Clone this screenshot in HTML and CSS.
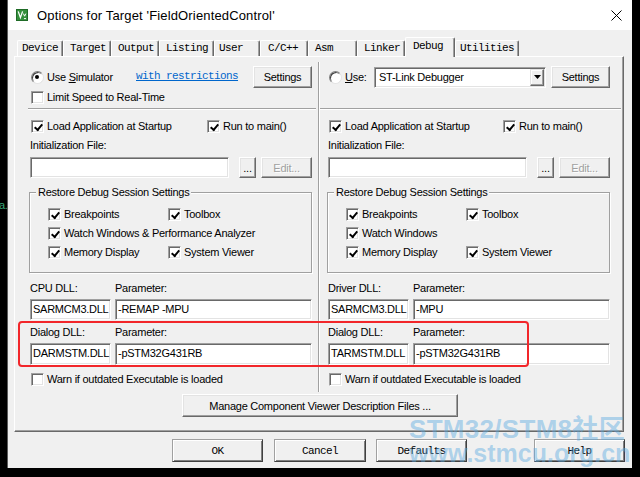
FILE: index.html
```html
<!DOCTYPE html>
<html lang="en">
<head>
<meta charset="utf-8">
<title>Options for Target 'FieldOrientedControl'</title>
<link rel="stylesheet" href="styles.css">
</head>
<body>
<div class="desk-note">a.</div>
<div class="window">
  <div class="titlebar">
    <svg class="app-icon" viewBox="0 0 12 12" aria-hidden="true">
      <rect x="0.5" y="0.5" width="11" height="11" fill="#35903c" stroke="#1f6b27"/>
      <path d="M2.2 2.4 L4.4 8.6 L6.6 2.4" stroke="#fff" stroke-width="1.3" fill="none"/>
      <path d="M7.4 4.6 L8.6 7.2 L9.8 4.6 M8 9.6 H10" stroke="#fff" stroke-width="1" fill="none"/>
    </svg>
    <span class="title">Options for Target 'FieldOrientedControl'</span>
    <svg class="close" viewBox="0 0 11 11" aria-hidden="true">
      <path d="M0.5 0.5 L10.5 10.5 M10.5 0.5 L0.5 10.5" stroke="#000" stroke-width="1" fill="none"/>
    </svg>
  </div>

  <div class="client">
    <div class="tabs">
      <div class="tab">Device</div>
      <div class="tab">Target</div>
      <div class="tab">Output</div>
      <div class="tab">Listing</div>
      <div class="tab">User</div>
      <div class="tab">C/C++</div>
      <div class="tab">Asm</div>
      <div class="tab">Linker</div>
      <div class="tab active">Debug</div>
      <div class="tab">Utilities</div>
    </div>

    <div class="panel">
      <div class="cols">
        <!-- Simulator side -->
        <div class="col col-sim">
          <div class="row r-top">
            <label class="opt opt-sim"><span class="radio on"></span><span>Use <u>S</u>imulator</span></label>
            <span class="link">with restrictions</span>
            <div class="btn settings">Settings</div>
          </div>
          <div class="row r-line r-limit">
            <label class="opt"><span class="box"></span>Limit Speed to Real-Time</label>
          </div>
          <div class="sep"></div>
          <div class="row r-line r-load">
            <label class="opt opt-first"><span class="box on"></span>Load Application at Startup</label>
            <label class="opt"><span class="box on"></span>Run to main()</label>
          </div>
          <div class="row r-line r-label">Initialization File:</div>
          <div class="row r-init">
            <div class="field init"></div>
            <div class="btn dots">...</div>
            <div class="btn edit disabled">Edit...</div>
          </div>
          <div class="group">
            <span class="legend">Restore Debug Session Settings</span>
            <div class="row r-line g-first">
              <label class="opt opt-col"><span class="box on"></span>Breakpoints</label>
              <label class="opt"><span class="box on"></span>Toolbox</label>
            </div>
            <div class="row r-line g-next">
              <label class="opt"><span class="box on"></span>Watch Windows &amp; Performance Analyzer</label>
            </div>
            <div class="row r-line g-next">
              <label class="opt opt-col"><span class="box on"></span>Memory Display</label>
              <label class="opt"><span class="box on"></span>System Viewer</label>
            </div>
          </div>
          <div class="row r-line dll-labels">
            <span class="dll-cap">CPU DLL:</span><span>Parameter:</span>
          </div>
          <div class="row dll-fields">
            <div class="field dll">SARMCM3.DLL</div>
            <div class="field param">-REMAP -MPU</div>
          </div>
          <div class="row r-line dll-labels dlg">
            <span class="dll-cap">Dialog DLL:</span><span>Parameter:</span>
          </div>
          <div class="row dll-fields tall">
            <div class="field dll">DARMSTM.DLL</div>
            <div class="field param">-pSTM32G431RB</div>
          </div>
          <div class="row r-line r-warn">
            <label class="opt"><span class="box"></span>Warn if outdated Executable is loaded</label>
          </div>
        </div>

        <!-- Target driver side -->
        <div class="col col-hw">
          <div class="row r-top">
            <label class="opt opt-use"><span class="radio"></span><span><u>U</u>se:</span></label>
            <div class="combo">
              <span>ST-Link Debugger</span>
              <span class="combo-arrow">
                <svg viewBox="0 0 7 4" aria-hidden="true"><path d="M0 0 H7 L3.5 4 Z" fill="#000"/></svg>
              </span>
            </div>
            <div class="btn settings">Settings</div>
          </div>
          <div class="row r-line r-limit"></div>
          <div class="sep"></div>
          <div class="row r-line r-load">
            <label class="opt opt-first hw"><span class="box on"></span>Load Application at Startup</label>
            <label class="opt"><span class="box on"></span>Run to main()</label>
          </div>
          <div class="row r-line r-label">Initialization File:</div>
          <div class="row r-init">
            <div class="field init"></div>
            <div class="btn dots">...</div>
            <div class="btn edit disabled">Edit...</div>
          </div>
          <div class="group">
            <span class="legend">Restore Debug Session Settings</span>
            <div class="row r-line g-first">
              <label class="opt opt-col"><span class="box on"></span>Breakpoints</label>
              <label class="opt"><span class="box on"></span>Toolbox</label>
            </div>
            <div class="row r-line g-next">
              <label class="opt"><span class="box on"></span>Watch Windows</label>
            </div>
            <div class="row r-line g-next">
              <label class="opt opt-col"><span class="box on"></span>Memory Display</label>
              <label class="opt"><span class="box on"></span>System Viewer</label>
            </div>
          </div>
          <div class="row r-line dll-labels">
            <span class="dll-cap">Driver DLL:</span><span>Parameter:</span>
          </div>
          <div class="row dll-fields">
            <div class="field dll">SARMCM3.DLL</div>
            <div class="field param">-MPU</div>
          </div>
          <div class="row r-line dll-labels dlg">
            <span class="dll-cap">Dialog DLL:</span><span>Parameter:</span>
          </div>
          <div class="row dll-fields tall">
            <div class="field dll">TARMSTM.DLL</div>
            <div class="field param">-pSTM32G431RB</div>
          </div>
          <div class="row r-line r-warn">
            <label class="opt"><span class="box"></span>Warn if outdated Executable is loaded</label>
          </div>
        </div>
      </div>

      <div class="btn manage">Manage Component Viewer Description Files ...</div>
    </div>

    <div class="footer">
      <div class="btn dlg-btn">OK</div>
      <div class="btn dlg-btn cancel">Cancel</div>
      <div class="btn dlg-btn defaults">Defaults</div>
      <div class="btn dlg-btn help">Help</div>
    </div>
  </div>

  <!-- red annotation frame around the Dialog DLL rows -->
  <div class="highlight"></div>

  <div class="watermark">
    <div>STM32/STM8社区</div>
    <div>www.stmcu.org.cn</div>
  </div>
</div>
</body>
</html>
```

FILE: styles.css
```css
* { box-sizing: border-box; }

html, body { margin: 0; padding: 0; }

body {
  position: relative;
  width: 640px;
  height: 477px;
  overflow: hidden;
  background: #000;
  color: #000;
  font-family: "Liberation Sans", Arial, sans-serif;
  font-size: 11px;
  letter-spacing: -0.25px;
}

.desk-note {
  position: absolute;
  left: -1px;
  top: 199px;
  color: #3aa878;
  font-size: 11px;
}

/* ---------- window frame ---------- */
.window {
  position: relative;
  margin-left: 8px;
  width: 624px;
  height: 468px;
  background: #f0f0f0;
  display: flex;
  flex-direction: column;
  box-shadow: -1px 0 0 #5c5c5c;
}

.titlebar {
  flex: none;
  height: 30px;
  background: #fff;
  display: flex;
  align-items: center;
  padding: 0 10px 0 8px;
}

.app-icon { width: 12px; height: 12px; margin-right: 9px; margin-top: -1px; }

.title {
  flex: 1;
  font-size: 13px;
  letter-spacing: 0.15px;
  color: #000;
}

.close { width: 11px; height: 11px; }

.client {
  flex: 1;
  display: flex;
  flex-direction: column;
  padding: 7px 0 0 6px;
}

/* ---------- tab strip ---------- */
.tabs {
  position: relative;
  z-index: 1;
  display: flex;
  align-items: flex-end;
  height: 19px;
  padding-left: 3px;
}

.tab {
  height: 16px;
  line-height: 15px;
  padding-left: 6px;
  font-family: "Liberation Mono", "Courier New", monospace;
  font-size: 11px;
  letter-spacing: -0.6px;
  border-top: 1px solid #fff;
  border-left: 1px solid #fff;
  border-right: 1px solid #696969;
  box-shadow: inset -1px 0 0 #a0a0a0;
  border-radius: 2px 2px 0 0;
  white-space: nowrap;
}

.tab:nth-child(1) { width: 46px; padding-left: 4px; }
.tab:nth-child(2) { width: 48px; }
.tab:nth-child(3) { width: 48px; }
.tab:nth-child(4) { width: 55px; }
.tab:nth-child(5) { width: 46px; padding-left: 4px; }
.tab:nth-child(6) { width: 48px; padding-left: 7px; }
.tab:nth-child(7) { width: 49px; }
.tab:nth-child(8) { width: 48px; }
.tab:nth-child(9) { width: 50px; }
.tab:nth-child(10) { width: 64px; padding-left: 4px; }

.tab.active {
  height: 20px;
  margin-bottom: -1px;
  line-height: 16px;
  padding-left: 7px;
  background: #f0f0f0;
}

/* ---------- property page ---------- */
.panel {
  width: 610px;
  height: 376px;
  border: 1px solid;
  border-color: #fff #696969 #696969 #fff;
  box-shadow: inset -1px -1px 0 #a0a0a0;
  display: flex;
  flex-direction: column;
}

.cols {
  display: flex;
  margin-top: 5px;
  height: 330px;
}

.col {
  display: flex;
  flex-direction: column;
  padding-top: 3px;
  width: 303px;
}

.col-sim { padding-left: 15px; padding-right: 6px; }

.col-hw {
  border-left: 1px solid #a0a0a0;
  box-shadow: inset 1px 0 0 #fff;
  padding-left: 9px;
}

.row { display: flex; align-items: center; flex: none; }
.r-top { height: 24px; }
.r-line { height: 14px; }
.r-limit { margin-top: 1px; }
.r-load { margin-top: 9px; }
.r-label { margin-top: 5px; }
.r-init { margin-top: 5px; height: 21px; }
.r-warn { margin-top: 7px; }

.sep {
  flex: none;
  height: 2px;
  margin-top: 4px;
  border-top: 1px solid #a0a0a0;
  border-bottom: 1px solid #fff;
}
.col-sim .sep { margin-left: -2px; margin-right: -4px; }
.col-hw .sep { margin-left: -8px; }

/* ---------- check boxes and radios ---------- */
.opt { display: flex; align-items: center; white-space: nowrap; }

.box, .radio {
  flex: none;
  width: 13px;
  height: 13px;
  margin: 0 3px 0 1px;
  background: #fff;
  border: 1px solid;
  border-color: #a0a0a0 #fff #fff #a0a0a0;
  box-shadow: inset 1px 1px 0 #696969, inset -1px -1px 0 #e3e3e3;
  position: relative;
}

.box.on::after {
  content: "";
  position: absolute;
  left: 3px;
  top: 2px;
  width: 3px;
  height: 6px;
  border: solid #000;
  border-width: 0 2px 2px 0;
  transform: translate(1px, -0.5px) rotate(40deg);
}

.radio {
  border-radius: 50%;
  border-color: #808080 #e3e3e3 #e3e3e3 #808080;
  box-shadow: inset 1px 1px 0 #404040;
}
.radio.on::after {
  content: "";
  position: absolute;
  left: 3px;
  top: 3px;
  width: 4px;
  height: 4px;
  border-radius: 50%;
  background: #000;
}

.opt-sim { width: 106px; }
.opt-use { width: 46px; }
.opt-first { width: 176px; }
.opt-first.hw { width: 174px; }
.opt-col { width: 120px; }

.link {
  font-family: "Liberation Mono", "Courier New", monospace;
  font-size: 11px;
  letter-spacing: -0.6px;
  color: #0066cc;
  text-decoration: underline;
  margin-top: -3px;
}

/* ---------- push buttons ---------- */
.btn {
  display: flex;
  align-items: center;
  justify-content: center;
  background: #f0f0f0;
  border: 1px solid;
  border-color: #fff #696969 #696969 #fff;
  box-shadow: inset -1px -1px 0 #a0a0a0, inset 1px 1px 0 #e3e3e3;
  white-space: nowrap;
  flex: none;
}

.settings { width: 59px; height: 22px; margin-left: auto; }
.combo + .settings { margin-left: 5px; }

.dots { width: 17px; height: 21px; margin-left: 10px; }
.edit { width: 51px; height: 21px; margin-left: 5px; }
.disabled { color: #a0a0a0; text-shadow: 1px 1px 0 #fff; }

.manage {
  width: 276px;
  height: 23px;
  margin: 2px auto 0;
  position: relative;
  left: 1px;
}

/* ---------- edit fields ---------- */
.field {
  flex: none;
  height: 21px;
  background: #fff;
  border: 1px solid;
  border-color: #a0a0a0 #fff #fff #a0a0a0;
  box-shadow: inset 1px 1px 0 #696969, inset -1px -1px 0 #e3e3e3;
  padding: 0 0 0 2px;
  line-height: 19px;
  white-space: nowrap;
  overflow: hidden;
}

.init { width: 199px; }

.combo {
  flex: none;
  display: flex;
  align-items: center;
  width: 172px;
  height: 21px;
  padding-left: 4px;
  background: #fff;
  border: 1px solid;
  border-color: #a0a0a0 #fff #fff #a0a0a0;
  box-shadow: inset 1px 1px 0 #696969, inset -1px -1px 0 #e3e3e3;
}

.combo-arrow {
  margin-left: auto;
  margin-right: 1px;
  width: 14px;
  height: 17px;
  display: flex;
  align-items: center;
  justify-content: center;
  background: #f0f0f0;
  border: 1px solid;
  border-color: #e3e3e3 #696969 #696969 #e3e3e3;
  box-shadow: inset -1px -1px 0 #a0a0a0, inset 1px 1px 0 #fff;
}
.combo-arrow svg { width: 7px; height: 4px; }

/* ---------- group box ---------- */
.group {
  flex: none;
  display: flex;
  flex-direction: column;
  margin-top: 14px;
  margin-left: -1px;
  width: 283px;
  height: 81px;
  padding-left: 17px;
  border: 1px solid #a0a0a0;
  box-shadow: inset 1px 1px 0 #fff, 1px 1px 0 #fff;
}

.legend {
  align-self: flex-start;
  margin: -7px 0 0 -11px;
  padding: 0 2px;
  line-height: 13px;
  background: #f0f0f0;
  white-space: nowrap;
}

.g-first { margin-top: 8px; }
.g-next { margin-top: 5px; }

/* ---------- DLL rows ---------- */
.dll-labels { margin-top: 8px; }
.dll-labels.dlg { margin-top: 5px; }
.dll-cap { width: 85px; }

.dll-fields { margin-top: 4px; height: 21px; }
.dll-fields.tall { height: 22px; }
.dll-fields .field { height: 100%; line-height: 19px; }
.dll { width: 81px; }
.param { width: 197px; margin-left: 4px; }

/* ---------- dialog buttons ---------- */
.footer {
  display: flex;
  margin-top: 7px;
  padding-left: 158px;
}

.dlg-btn {
  width: 91px;
  height: 23px;
  font-family: "Liberation Mono", "Courier New", monospace;
  font-size: 11px;
  letter-spacing: -0.6px;
  border-color: #a0a0a0 #404040 #404040 #a0a0a0;
  box-shadow: inset 1px 1px 0 #fff, inset -1px -1px 0 #808080;
}
.cancel { width: 92px; margin-left: 11px; }
.defaults { margin-left: 10px; }
.help { margin-left: 67px; }

/* ---------- overlays ---------- */
.highlight {
  position: absolute;
  left: 10px;
  top: 321px;
  width: 511px;
  height: 46px;
  border: 2px solid #f2262a;
  border-radius: 4px;
  pointer-events: none;
}

.watermark {
  position: absolute;
  left: 401px;
  top: 417px;
  font-family: "Liberation Sans", "Noto Sans CJK SC", sans-serif;
  font-weight: bold;
  font-size: 26px;
  line-height: 24px;
  letter-spacing: 0.3px;
  color: rgba(90, 170, 225, 0.45);
  pointer-events: none;
  white-space: nowrap;
}
.watermark div + div { font-size: 25px; letter-spacing: 0; }
```
